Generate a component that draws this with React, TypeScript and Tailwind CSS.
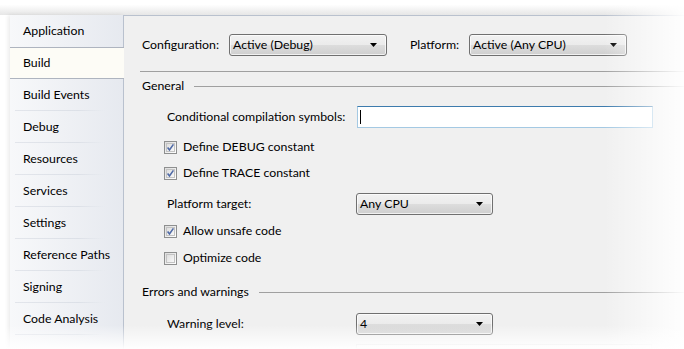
import React from "react";

// Visual Studio "Build" project properties page, Windows 7 look, with the
// soft faded edges of the original capture.

const tabs = [
  "Application",
  "Build",
  "Build Events",
  "Debug",
  "Resources",
  "Services",
  "Settings",
  "Reference Paths",
  "Signing",
  "Code Analysis",
];

function Combo({ value, width }: { value: string; width: string }) {
  return (
    <div
      className={`${width} relative flex h-[22px] items-center rounded-[3px] border border-[#707070] bg-[linear-gradient(#f2f2f2_0%,#ebebeb_50%,#dddddd_50%,#cfcfcf_100%)] pl-[3px] shadow-[inset_0_0_0_1px_rgba(255,255,255,0.7)]`}
    >
      <span className="leading-none">{value}</span>
      <svg
        className="absolute right-[9px] top-[8px]"
        width="7"
        height="4"
        viewBox="0 0 7 4"
      >
        <path d="M0 0H7L3.5 4Z" fill="#000" />
      </svg>
    </div>
  );
}

function Check({ checked, label }: { checked: boolean; label: string }) {
  return (
    <div className="flex h-[20px] items-center pl-[40px]">
      <div className="flex h-[13px] w-[13px] items-center justify-center border border-[#8e8f8f] bg-[linear-gradient(135deg,#dcdcdc,#ffffff)]">
        <div className="flex h-[9px] w-[9px] items-center justify-center border border-[#c3c3c3] bg-[linear-gradient(135deg,#dedede,#f8f8f8)]">
          {checked ? (
            <svg width="9" height="9" viewBox="0 0 9 9" className="shrink-0">
              <path
                d="M1.6 4.4L3.5 6.9L7.4 1.4"
                fill="none"
                stroke="#4f6aa6"
                strokeWidth="1.6"
              />
            </svg>
          ) : null}
        </div>
      </div>
      <span className="ml-[6px]">{label}</span>
    </div>
  );
}

function Header({ label }: { label: string }) {
  return (
    <div className="flex h-[16px] items-center pl-[18px]">
      <span>{label}</span>
      <div className="ml-[10px] h-px flex-1 bg-[#a0a0a0]" />
    </div>
  );
}

export default function App() {
  return (
    <div className="relative h-[349px] w-[684px] overflow-hidden bg-white font-['Lato','Open_Sans',sans-serif] text-[12.3px] text-black">
      <div className="absolute inset-x-0 top-0 h-[15px] bg-[linear-gradient(#ffffff_30%,#e6e6e6)]" />
      <div className="relative flex h-full pl-[10px] pt-[15px]">
        {/* tab strip */}
        <div className="flex w-[114px] flex-col bg-[linear-gradient(90deg,#f7f8fa,#e6e9ef)] shadow-[-2px_0_4px_rgba(0,0,0,0.08)]">
          {tabs.map((t, i) => {
            const active = t === "Build";
            const nextActive = tabs[i + 1] === "Build";
            return active ? (
              <div
                key={t}
                className="flex h-[32px] items-center border-y border-[#aeb4bf] bg-[#fdfcf6] pl-[13px]"
              >
                {t}
              </div>
            ) : (
              <div
                key={t}
                className="relative flex h-[32px] items-center border-r border-[#b9c1ce] pl-[13px]"
              >
                {t}
                {!nextActive ? (
                  <div className="absolute bottom-0 left-[5px] h-px w-[90px] bg-[linear-gradient(90deg,#e2e5eb,#dce0e7_70%,rgba(220,224,231,0))]" />
                ) : null}
              </div>
            );
          })}
          <div className="flex-1 border-r border-[#b9c1ce]" />
        </div>

        {/* page */}
        <div className="flex flex-1 flex-col border-t border-[#b9c1ce] bg-[#f0f0f0]">
          <div className="mt-[18px] flex h-[22px] items-center pl-[18px]">
            <span className="w-[87px]">Configuration:</span>
            <Combo value="Active (Debug)" width="w-[158px]" />
            <span className="ml-[23px] w-[59px]">Platform:</span>
            <Combo value="Active (Any CPU)" width="w-[158px]" />
          </div>
          <div className="ml-[16px] mt-[15px] h-px bg-[#a0a0a0]" />
          <div className="mt-[7px]">
            <Header label="General" />
          </div>
          <div className="mt-[12px] flex h-[22px] items-center pl-[43px]">
            <span className="w-[190px]">Conditional compilation symbols:</span>
            <div className="relative h-[22px] w-[296px] border border-[#a4c9e3] border-t-[#3d7bad] bg-white">
              <div className="absolute left-[2px] top-[3px] h-[14px] w-px bg-black" />
            </div>
          </div>
          <div className="mt-[9px]">
            <Check checked label="Define DEBUG constant" />
          </div>
          <div className="mt-[6px]">
            <Check checked label="Define TRACE constant" />
          </div>
          <div className="mt-[10px] flex h-[22px] items-center pl-[43px]">
            <span className="w-[189px]">Platform target:</span>
            <Combo value="Any CPU" width="w-[137px]" />
          </div>
          <div className="mt-[6px]">
            <Check checked label="Allow unsafe code" />
          </div>
          <div className="mt-[7px]">
            <Check checked={false} label="Optimize code" />
          </div>
          <div className="mt-[16px]">
            <Header label="Errors and warnings" />
          </div>
          <div className="mt-[13px] flex h-[22px] items-center pl-[43px]">
            <span className="w-[189px]">Warning level:</span>
            <Combo value="4" width="w-[137px]" />
          </div>
          <div className="ml-[232px] mt-[9px] h-[22px] w-[296px] border border-[#d8d8d8] bg-[#f4f4f4]" />
        </div>
      </div>

      {/* faded capture edges */}
      <div className="pointer-events-none absolute inset-y-0 right-0 w-[80px] bg-[linear-gradient(90deg,rgba(255,255,255,0),rgba(255,255,255,0.95))]" />
      <div className="pointer-events-none absolute inset-x-0 bottom-0 h-[24px] bg-[linear-gradient(rgba(255,255,255,0),rgba(255,255,255,0.97))]" />
    </div>
  );
}
